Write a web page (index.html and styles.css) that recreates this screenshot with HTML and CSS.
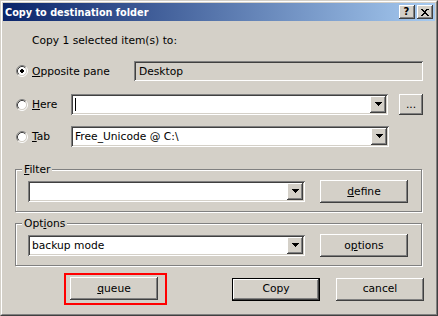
FILE: index.html
```html
<!DOCTYPE html>
<html>
<head>
<meta charset="utf-8">
<link rel="stylesheet" href="styles.css">
</head>
<body>
<div class="window">
  <div class="frame">
    <div class="titlebar">
      <span class="title">Copy to destination folder</span>
      <div class="tbuttons">
        <span class="tbtn help">?</span>
        <span class="tbtn close">
          <svg width="8" height="7" viewBox="0 0 8 7"><path d="M0 0h2v1h-2zM1 1h2v1h-2zM2 2h1v1h-1zM5 0h2v1h-2zM4 1h2v1h-2zM3 2h2v1h-2zM3 3h2v1h-2zM2 4h2v1h-2zM1 5h2v1h-2zM0 6h2v1h-2zM4 4h2v1h-2zM5 5h2v1h-2zM6 6h2v1h-2zM6 0h2v1h-2zM5 1h1v1h-1z" fill="#000"/></svg>
        </span>
      </div>
    </div>
    <div class="content">
      <div class="intro">Copy 1 selected item(s) to:</div>

      <div class="row row-opp">
        <span class="radio checked"><svg width="12" height="12" viewBox="0 0 12 12"><circle cx="6" cy="6" r="4.5" fill="#fff"/><path d="M9.89 2.11A5.5 5.5 0 0 0 2.11 9.89" stroke="#808080" fill="none"/><path d="M2.11 9.89A5.5 5.5 0 0 0 9.89 2.11" stroke="#fff" fill="none"/><path d="M9.18 2.82A4.5 4.5 0 0 0 2.82 9.18" stroke="#404040" fill="none"/><path d="M2.82 9.18A4.5 4.5 0 0 0 9.18 2.82" stroke="#d4d0c8" fill="none"/><rect x="4" y="5" width="4" height="2" fill="#000"/><rect x="5" y="4" width="2" height="4" fill="#000"/></svg></span>
        <span class="rlabel lbl-opp"><u>O</u>pposite pane</span>
        <span class="field ro">Desktop</span>
      </div>

      <div class="row row-here">
        <span class="radio"><svg width="12" height="12" viewBox="0 0 12 12"><circle cx="6" cy="6" r="4.5" fill="#fff"/><path d="M9.89 2.11A5.5 5.5 0 0 0 2.11 9.89" stroke="#808080" fill="none"/><path d="M2.11 9.89A5.5 5.5 0 0 0 9.89 2.11" stroke="#fff" fill="none"/><path d="M9.18 2.82A4.5 4.5 0 0 0 2.82 9.18" stroke="#404040" fill="none"/><path d="M2.82 9.18A4.5 4.5 0 0 0 9.18 2.82" stroke="#d4d0c8" fill="none"/></svg></span>
        <span class="rlabel lbl-short"><u>H</u>ere</span>
        <span class="combo wide"><span class="ctext"><span class="caret"></span></span><span class="dd"><svg width="7" height="4" viewBox="0 0 7 4"><path d="M0 0h7v1h-7zM1 1h5v1h-5zM2 2h3v1h-3zM3 3h1v1h-1z" fill="#000"/></svg></span></span>
        <span class="btn small">...</span>
      </div>

      <div class="row row-tab">
        <span class="radio"><svg width="12" height="12" viewBox="0 0 12 12"><circle cx="6" cy="6" r="4.5" fill="#fff"/><path d="M9.89 2.11A5.5 5.5 0 0 0 2.11 9.89" stroke="#808080" fill="none"/><path d="M2.11 9.89A5.5 5.5 0 0 0 9.89 2.11" stroke="#fff" fill="none"/><path d="M9.18 2.82A4.5 4.5 0 0 0 2.82 9.18" stroke="#404040" fill="none"/><path d="M2.82 9.18A4.5 4.5 0 0 0 9.18 2.82" stroke="#d4d0c8" fill="none"/></svg></span>
        <span class="rlabel lbl-short"><u>T</u>ab</span>
        <span class="combo wide"><span class="ctext">Free_Unicode @ C:\</span><span class="dd"><svg width="7" height="4" viewBox="0 0 7 4"><path d="M0 0h7v1h-7zM1 1h5v1h-5zM2 2h3v1h-3zM3 3h1v1h-1z" fill="#000"/></svg></span></span>
      </div>

      <div class="group g-filter">
        <span class="glabel"><u>F</u>ilter</span>
        <div class="grow">
          <span class="combo narrow"><span class="ctext"></span><span class="dd"><svg width="7" height="4" viewBox="0 0 7 4"><path d="M0 0h7v1h-7zM1 1h5v1h-5zM2 2h3v1h-3zM3 3h1v1h-1z" fill="#000"/></svg></span></span>
          <span class="btn"><u>d</u>efine</span>
        </div>
      </div>

      <div class="group g-options">
        <span class="glabel">Opt<u>i</u>ons</span>
        <div class="grow">
          <span class="combo narrow"><span class="ctext">backup mode</span><span class="dd"><svg width="7" height="4" viewBox="0 0 7 4"><path d="M0 0h7v1h-7zM1 1h5v1h-5zM2 2h3v1h-3zM3 3h1v1h-1z" fill="#000"/></svg></span></span>
          <span class="btn">o<u>p</u>tions</span>
        </div>
      </div>

      <div class="actions">
        <span class="highlight"><span class="btn"><u>q</u>ueue</span></span>
        <span class="btn default">Copy</span>
        <span class="btn cancel">cancel</span>
      </div>
    </div>
  </div>
</div>
</body>
</html>
```
FILE: styles.css
```css
html, body {
  margin: 0;
  padding: 0;
  background: #d4d0c8;
}
body {
  font-family: "DejaVu Sans", Verdana, sans-serif;
  font-size: 10.7px;
  color: #000;
}
.window {
  width: 438px;
  height: 316px;
  box-sizing: border-box;
  border: 1px solid;
  border-color: #d4d0c8 #404040 #404040 #d4d0c8;
  background: #d4d0c8;
}
.frame {
  height: 100%;
  box-sizing: border-box;
  border: 1px solid;
  border-color: #fff #808080 #808080 #fff;
  padding: 1px;
  display: flex;
  flex-direction: column;
}
.titlebar {
  height: 18px;
  flex: none;
  display: flex;
  align-items: center;
  background: linear-gradient(to right, #0a246a, #a6caf0);
}
.title {
  color: #fff;
  font-family: "DejaVu Sans Condensed", "DejaVu Sans", sans-serif;
  font-weight: bold;
  font-size: 10.8px;
  padding-left: 2px;
  line-height: 13px;
}
.tbuttons {
  margin-left: auto;
  margin-right: 2px;
  display: flex;
  gap: 2px;
}
.tbtn {
  width: 16px;
  height: 14px;
  box-sizing: border-box;
  background: #d4d0c8;
  box-shadow: inset -1px -1px 0 #404040, inset 1px 1px 0 #fff, inset -2px -2px 0 #808080;
  display: flex;
  align-items: center;
  justify-content: center;
}
.help {
  font-family: "DejaVu Sans", sans-serif;
  font-weight: bold;
  font-size: 10px;
  line-height: 10px;
  padding-right: 1px;
}
.close svg { display: block; margin-left: -1px; }

.content {
  flex: 1;
  padding: 0 12px 0 12px;
  display: flex;
  flex-direction: column;
}
.intro {
  margin-top: 13px;
  margin-left: 17px;
  line-height: 13px;
  height: 13px;
}
.row {
  display: flex;
  align-items: center;
}
.row-opp { margin-top: 14px; height: 20px; }
.row-here { margin-top: 13px; height: 21px; }
.row-tab { margin-top: 11px; height: 21px; }
.radio {
  width: 12px;
  height: 12px;
  margin-left: 1px;
  flex: none;
}
.radio svg { display: block; }
.rlabel {
  margin-left: 4px;
  line-height: 13px;
}
.lbl-opp { width: 102px; }
.lbl-short { width: 39px; }
.field {
  height: 20px;
  box-sizing: border-box;
  padding: 0 5px;
  display: flex;
  align-items: center;
  box-shadow: inset 1px 1px 0 #808080, inset -1px -1px 0 #fff, inset 2px 2px 0 #404040, inset -2px -2px 0 #d4d0c8;
}
.ro {
  width: 289px;
  background: #d4d0c8;
}
.combo {
  height: 21px;
  box-sizing: border-box;
  padding: 2px;
  background: #fff;
  display: flex;
  box-shadow: inset 1px 1px 0 #808080, inset -1px -1px 0 #fff, inset 2px 2px 0 #404040, inset -2px -2px 0 #d4d0c8;
}
.combo.wide { width: 318px; }
.combo.narrow { width: 277px; }
.ctext {
  flex: 1;
  padding-left: 2px;
  display: flex;
  align-items: center;
  white-space: nowrap;
}
.caret {
  width: 1px;
  height: 13px;
  background: #000;
}
.dd {
  width: 16px;
  height: 17px;
  flex: none;
  box-sizing: border-box;
  background: #d4d0c8;
  box-shadow: inset -1px -1px 0 #404040, inset 1px 1px 0 #fff, inset -2px -2px 0 #808080;
  display: flex;
  align-items: center;
  justify-content: center;
  padding-bottom: 1px;
}
.dd svg { display: block; }
.btn {
  width: 88px;
  height: 23px;
  box-sizing: border-box;
  background: #d4d0c8;
  box-shadow: inset -1px -1px 0 #404040, inset 1px 1px 0 #fff, inset -2px -2px 0 #808080;
  display: flex;
  align-items: center;
  justify-content: center;
  flex: none;
  padding-bottom: 1px;
}
.btn.small {
  width: 24px;
  height: 21px;
  margin-left: 11px;
}
.btn.default {
  border: 1px solid #000;
}
.group {
  width: 407px;
  box-sizing: border-box;
  border: 1px solid #808080;
  box-shadow: 1px 1px 0 #fff, inset 1px 1px 0 #fff;
  display: flex;
  flex-direction: column;
  padding: 0 12px 8px 12px;
}
.g-filter { margin-top: 22px; }
.g-options { margin-top: 11px; }
.glabel {
  align-self: flex-start;
  margin: -7px 0 0 -6px;
  padding: 0 2px;
  line-height: 13px;
  height: 13px;
  background: #d4d0c8;
}
.grow {
  margin-top: 4px;
  display: flex;
  align-items: center;
  gap: 15px;
}
.actions {
  margin-top: 7px;
  display: flex;
  align-items: center;
}
.highlight {
  margin-left: 49px;
  border: 2px solid #ff0000;
  padding: 2px 7px 3px 4px;
}
.actions .default { margin-left: 65px; }
.actions .cancel { margin-left: 16px; }
```
